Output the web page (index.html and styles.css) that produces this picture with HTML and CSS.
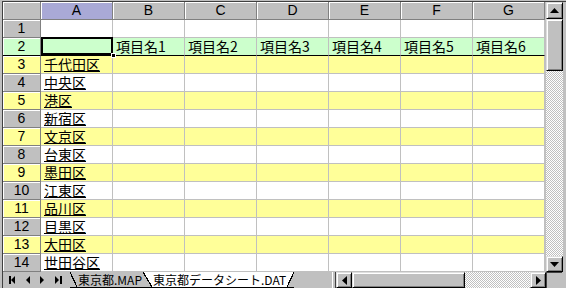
FILE: index.html
```html
<!DOCTYPE html>
<html lang="ja">
<head>
  <meta charset="UTF-8" />
  <title>東京都データシート.DAT</title>
  <link rel="stylesheet" href="styles.css">
</head>
<body>
  <div class="window">
    <div class="top">
      <div class="sheet">
        <div class="row head">
          <div class="c corner"></div>
          <div class="c hl">A</div><div class="c">B</div><div class="c">C</div><div class="c">D</div><div class="c">E</div><div class="c">F</div><div class="c">G</div>
        </div>
        <div class="row">
          <div class="c rh">1</div>
          <div class="c"></div><div class="c"></div><div class="c"></div><div class="c"></div><div class="c"></div><div class="c"></div><div class="c"></div>
        </div>
        <div class="row green">
          <div class="c rh hl">2</div>
          <div class="c sel"></div><div class="c">項目名1</div><div class="c">項目名2</div><div class="c">項目名3</div><div class="c">項目名4</div><div class="c">項目名5</div><div class="c">項目名6</div>
        </div>
        <div class="row yellow">
          <div class="c rh">3</div>
          <div class="c name">千代田区</div><div class="c"></div><div class="c"></div><div class="c"></div><div class="c"></div><div class="c"></div><div class="c"></div>
        </div>
        <div class="row">
          <div class="c rh">4</div>
          <div class="c name">中央区</div><div class="c"></div><div class="c"></div><div class="c"></div><div class="c"></div><div class="c"></div><div class="c"></div>
        </div>
        <div class="row yellow">
          <div class="c rh">5</div>
          <div class="c name">港区</div><div class="c"></div><div class="c"></div><div class="c"></div><div class="c"></div><div class="c"></div><div class="c"></div>
        </div>
        <div class="row">
          <div class="c rh">6</div>
          <div class="c name">新宿区</div><div class="c"></div><div class="c"></div><div class="c"></div><div class="c"></div><div class="c"></div><div class="c"></div>
        </div>
        <div class="row yellow">
          <div class="c rh">7</div>
          <div class="c name">文京区</div><div class="c"></div><div class="c"></div><div class="c"></div><div class="c"></div><div class="c"></div><div class="c"></div>
        </div>
        <div class="row">
          <div class="c rh">8</div>
          <div class="c name">台東区</div><div class="c"></div><div class="c"></div><div class="c"></div><div class="c"></div><div class="c"></div><div class="c"></div>
        </div>
        <div class="row yellow">
          <div class="c rh">9</div>
          <div class="c name">墨田区</div><div class="c"></div><div class="c"></div><div class="c"></div><div class="c"></div><div class="c"></div><div class="c"></div>
        </div>
        <div class="row">
          <div class="c rh">10</div>
          <div class="c name">江東区</div><div class="c"></div><div class="c"></div><div class="c"></div><div class="c"></div><div class="c"></div><div class="c"></div>
        </div>
        <div class="row yellow">
          <div class="c rh">11</div>
          <div class="c name">品川区</div><div class="c"></div><div class="c"></div><div class="c"></div><div class="c"></div><div class="c"></div><div class="c"></div>
        </div>
        <div class="row">
          <div class="c rh">12</div>
          <div class="c name">目黒区</div><div class="c"></div><div class="c"></div><div class="c"></div><div class="c"></div><div class="c"></div><div class="c"></div>
        </div>
        <div class="row yellow">
          <div class="c rh">13</div>
          <div class="c name">大田区</div><div class="c"></div><div class="c"></div><div class="c"></div><div class="c"></div><div class="c"></div><div class="c"></div>
        </div>
        <div class="row">
          <div class="c rh">14</div>
          <div class="c name">世田谷区</div><div class="c"></div><div class="c"></div><div class="c"></div><div class="c"></div><div class="c"></div><div class="c"></div>
        </div>
      </div>

      <div class="vscroll">
        <div class="btn">
          <svg width="9" height="5" viewBox="0 0 9 5"><polygon points="4.5,0 9,5 0,5" fill="#000"/></svg>
        </div>
        <div class="btn vthumb"></div>
        <div class="track"></div>
        <div class="btn">
          <svg width="9" height="5" viewBox="0 0 9 5"><polygon points="0,0 9,0 4.5,5" fill="#000"/></svg>
        </div>
      </div>
    </div>

    <div class="bottom">
      <div class="nav">
        <svg width="67" height="16" viewBox="0 0 67 16">
          <rect x="6" y="4" width="2" height="8" fill="#000"/>
          <polygon points="12,4 12,12 8,8" fill="#000"/>
          <polygon points="27,4 27,12 23,8" fill="#000"/>
          <polygon points="37,4 37,12 41,8" fill="#000"/>
          <polygon points="52,4 52,12 56,8" fill="#000"/>
          <rect x="57" y="4" width="2" height="8" fill="#000"/>
        </svg>
      </div>
      <div class="tabs">
        <div class="slant back"></div>
        <div class="tab">東京都.MAP</div>
        <div class="slant mid"></div>
        <div class="tab active">東京都データシート.DAT</div>
        <div class="slant end"></div>
        <div class="rest"></div>
      </div>
      <div class="splitter"></div>
      <div class="hscroll">
        <div class="btn">
          <svg width="5" height="9" viewBox="0 0 5 9"><polygon points="5,0 5,9 0,4.5" fill="#000"/></svg>
        </div>
        <div class="btn"></div>
        <div class="track"></div>
        <div class="btn">
          <svg width="5" height="9" viewBox="0 0 5 9"><polygon points="0,0 0,9 5,4.5" fill="#000"/></svg>
        </div>
      </div>
      <div class="sizebox"></div>
    </div>
  </div>
</body>
</html>
```

FILE: styles.css
```css
body {
  margin: 0;
  background: #c0c0c0;
  font-family: "Noto Sans CJK JP", "Liberation Sans", sans-serif;
  overflow: hidden;
}

.window {
  width: 566px;
  height: 288px;
  padding: 1px 0 0 2px;
  box-sizing: border-box;
  display: grid;
  grid-template-rows: 271px 16px;
}

.top {
  display: grid;
  grid-template-columns: 542px 17px;
  column-gap: 1px;
  border-top: 1px solid #404040;
  border-left: 1px solid #404040;
}

.sheet {
  display: grid;
  grid-template-columns: 38px repeat(7, 72px);
  grid-auto-rows: 18px;
  background: #fff;
}

.row {
  display: contents;
}

.c {
  box-sizing: border-box;
  border-right: 1px solid #c0c0c0;
  border-bottom: 1px solid #c0c0c0;
  background: #fff;
  font-size: 14px;
  line-height: 17px;
  padding-left: 3px;
  white-space: nowrap;
  color: #000;
}

.head .c,
.rh {
  background: #c0c0c0;
  border-right: 1px solid #808080;
  border-bottom: 1px solid #808080;
  box-shadow: inset 1px 1px #fff;
  font-family: "Liberation Sans", Arial, sans-serif;
  font-size: 14px;
  text-align: center;
  padding-left: 0;
}

.head .c.hl,
.rh.hl {
  background: #a9a9d6;
}

.green .c {
  background: #ccffcc;
  border-bottom-color: #000;
}

.yellow .c {
  background: #ffff99;
}

.name {
  text-decoration: underline;
  text-underline-offset: 1px;
}

.sel {
  position: relative;
  z-index: 1;
}

.sel::after {
  content: "";
  position: absolute;
  left: 0;
  top: -1px;
  width: 72px;
  height: 18px;
  border: 2px solid #000;
  box-sizing: border-box;
}

.sel::before {
  content: "";
  position: absolute;
  right: -4px;
  bottom: -3px;
  width: 5px;
  height: 5px;
  background: #000;
  border: 1px solid #fff;
  box-sizing: border-box;
  z-index: 2;
}

/* scroll bars */
.btn {
  box-sizing: border-box;
  background: #c0c0c0;
  border: 1px solid;
  border-color: #dfdfdf #000 #000 #dfdfdf;
  box-shadow: inset 1px 1px #fff, inset -1px -1px #808080;
  display: flex;
  align-items: center;
  justify-content: center;
}

.track {
  background: repeating-conic-gradient(#c0c0c0 0 25%, #fff 0 50%) 0 0 / 2px 2px;
}

.vscroll {
  display: grid;
  grid-template-rows: 17px 52px 1fr 16px;
  height: 270px;
}

.bottom {
  display: grid;
  grid-template-columns: 67px 262px 4px 210px 16px;
  height: 16px;
  border-left: 1px solid #404040;
}

.nav svg {
  display: block;
}

.tabs {
  display: flex;
  height: 16px;
  font-size: 12px;
  line-height: 15px;
  overflow: hidden;
}

.tab {
  border-bottom: 1px solid #000;
  padding: 0 1px;
  white-space: nowrap;
  flex: none;
}

.tab.active {
  background: #fff;
}

.slant {
  flex: none;
  height: 16px;
  border-bottom: 1px solid #000;
  box-sizing: border-box;
}

.slant.back {
  width: 7px;
  background: linear-gradient(to top right, #c0c0c0 calc(50% - 0.6px), #000 calc(50% - 0.6px), #000 calc(50% + 0.6px), #c0c0c0 calc(50% + 0.6px));
}

.slant.mid {
  width: 9px;
  background: linear-gradient(to top right, #c0c0c0 calc(50% - 0.6px), #000 calc(50% - 0.6px), #000 calc(50% + 0.6px), #fff calc(50% + 0.6px));
}

.slant.end {
  width: 7px;
  background: linear-gradient(to bottom right, #fff calc(50% - 0.6px), #000 calc(50% - 0.6px), #000 calc(50% + 0.6px), #c0c0c0 calc(50% + 0.6px));
}

.rest {
  flex: 1;
}

.splitter {
  box-sizing: border-box;
  border-left: 1px solid #fff;
  border-right: 1px solid #404040;
  background: #c0c0c0;
}

.hscroll {
  display: grid;
  grid-template-columns: 16px 113px 1fr 16px;
  height: 16px;
}

.sizebox {
  box-sizing: border-box;
  border-top: 1px solid #404040;
  border-left: 1px solid #404040;
  background: #c0c0c0;
}
```
